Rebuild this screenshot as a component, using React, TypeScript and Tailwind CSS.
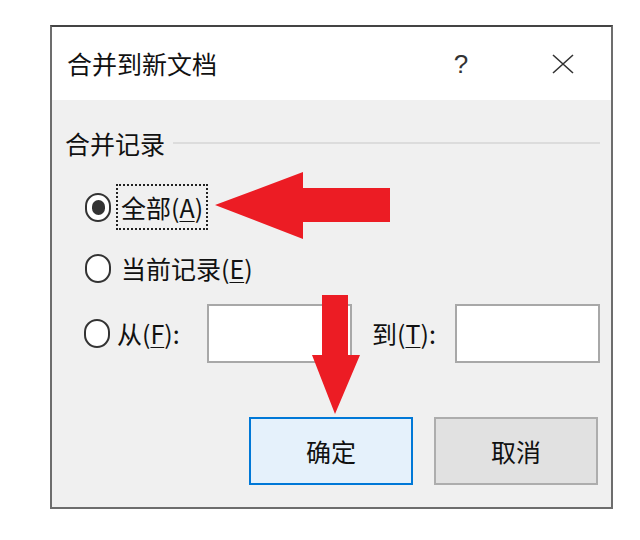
import React from 'react';

const cjk = { fontFamily: '"Noto Sans CJK SC", "Noto Sans", sans-serif' };

const Radio: React.FC<{ checked?: boolean }> = ({ checked }) => (
  <div className="w-[26px] h-[29px] rounded-full border-2 border-[#333] bg-white flex items-center justify-center shrink-0">
    {checked && <div className="w-[13px] h-[15px] rounded-full bg-[#333]" />}
  </div>
);

const Key: React.FC<{ k: string }> = ({ k }) => (
  <>
    (<span className="underline underline-offset-[3px] decoration-1">{k}</span>)
  </>
);

const App: React.FC = () => {
  return (
    <div className="relative w-[640px] h-[540px] bg-white text-[#111]" style={cjk}>
      <div className="ml-[50px] pt-[25px]">
        <div className="w-[563px] h-[484px] border-2 border-[#6d6d6d] border-t-[#444] flex flex-col">
          {/* 标题栏 */}
          <div className="h-[73px] bg-white flex items-center pl-[15px] shrink-0">
            <div className="text-[25px] leading-none">合并到新文档</div>
            <div className="ml-auto w-[24px] text-center text-[26px] leading-none text-[#333] mr-[78px]" style={{ fontFamily: '"Liberation Sans", sans-serif', fontWeight: 300 }}>
              ?
            </div>
            <svg width="24" height="20" viewBox="0 0 24 20" className="mr-[36px]">
              <path d="M2 1 L22 19 M22 1 L2 19" stroke="#333" strokeWidth="1.6" fill="none" />
            </svg>
          </div>

          {/* 内容 */}
          <div className="flex-1 bg-[#f0f0f0] flex flex-col pl-[13px] pr-[11px]">
            <div className="mt-[28px] h-[30px] flex items-center">
              <span className="text-[25px] leading-none">合并记录</span>
              <div className="flex-1 h-[2px] bg-[#dcdcdc] ml-[8px]" />
            </div>

            <div className="mt-[26px] h-[46px] flex items-center pl-[20px]">
              <Radio checked />
              <div className="ml-[5px] h-[46px] px-[3px] border-2 border-dotted border-[#222] flex items-center text-[25px] leading-none">
                全部<Key k="A" />
              </div>
            </div>

            <div className="mt-[15px] h-[46px] flex items-center pl-[20px]">
              <Radio />
              <div className="ml-[10px] text-[25px] leading-none">
                当前记录<Key k="E" />
              </div>
            </div>

            <div className="mt-[13px] h-[59px] flex items-center pl-[19px]">
              <Radio />
              <div className="ml-[7px] text-[25px] leading-none w-[64px]">
                从<Key k="F" />:
              </div>
              <div className="ml-[26px] w-[145px] h-[59px] bg-white border-2 border-[#a8a8a8]" />
              <div className="ml-[20px] text-[25px] leading-none w-[64px]">
                到<Key k="T" />:
              </div>
              <div className="ml-[19px] w-[145px] h-[59px] bg-white border-2 border-[#a8a8a8]" />
            </div>

            <div className="mt-[54px] flex justify-end gap-[21px] pr-[2px]">
              <button className="w-[164px] h-[68px] bg-[#e5f1fb] border-2 border-[#0078d7] text-[25px] leading-none">
                确定
              </button>
              <button className="w-[164px] h-[68px] bg-[#e1e1e1] border-2 border-[#adadad] text-[25px] leading-none">
                取消
              </button>
            </div>
          </div>
        </div>
      </div>

      {/* 红色标注箭头 */}
      <svg className="absolute inset-0 pointer-events-none" width="640" height="540">
        <polygon points="215,205 303,172 303,188 390,188 390,222 303,222 303,239" fill="#ec1c24" />
        <polygon points="322,295 348,295 348,355 360,355 335,414 312,355 322,355" fill="#ec1c24" />
      </svg>
    </div>
  );
};

export default App;
